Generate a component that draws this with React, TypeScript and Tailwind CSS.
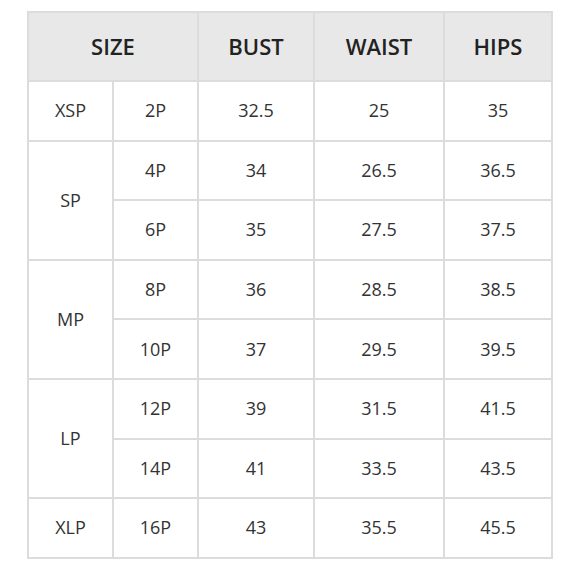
import React from 'react';

const rows = [
  { group: 'XSP', span: 1, size: '2P', bust: '32.5', waist: '25', hips: '35' },
  { group: 'SP', span: 2, size: '4P', bust: '34', waist: '26.5', hips: '36.5' },
  { size: '6P', bust: '35', waist: '27.5', hips: '37.5' },
  { group: 'MP', span: 2, size: '8P', bust: '36', waist: '28.5', hips: '38.5' },
  { size: '10P', bust: '37', waist: '29.5', hips: '39.5' },
  { group: 'LP', span: 2, size: '12P', bust: '39', waist: '31.5', hips: '41.5' },
  { size: '14P', bust: '41', waist: '33.5', hips: '43.5' },
  { group: 'XLP', span: 1, size: '16P', bust: '43', waist: '35.5', hips: '45.5' },
];

const cell = 'border-2 border-[#dcdcdc] text-center align-middle';

export default function App() {
  return (
    <div className="w-[580px] h-[580px] bg-white pt-[11px] font-['Open_Sans',sans-serif]">
      <table className="mx-auto w-[524px] table-fixed border-collapse">
        <colgroup>
          <col className="w-[85px]" />
          <col className="w-[85px]" />
          <col className="w-[116px]" />
          <col className="w-[130px]" />
          <col className="w-[108px]" />
        </colgroup>
        <thead>
          <tr className="h-[69px] bg-[#e8e8e8] text-[22px] text-[#222]">
            <th colSpan={2} className={`${cell} font-semibold`}>SIZE</th>
            <th className={`${cell} font-semibold`}>BUST</th>
            <th className={`${cell} font-semibold`}>WAIST</th>
            <th className={`${cell} font-semibold`}>HIPS</th>
          </tr>
        </thead>
        <tbody className="text-[18px] text-[#333]">
          {rows.map((r) => (
            <tr key={r.size} className="h-[59.6px]">
              {r.group && (
                <td rowSpan={r.span} className={cell}>{r.group}</td>
              )}
              <td className={cell}>{r.size}</td>
              <td className={cell}>{r.bust}</td>
              <td className={cell}>{r.waist}</td>
              <td className={cell}>{r.hips}</td>
            </tr>
          ))}
        </tbody>
      </table>
    </div>
  );
}
